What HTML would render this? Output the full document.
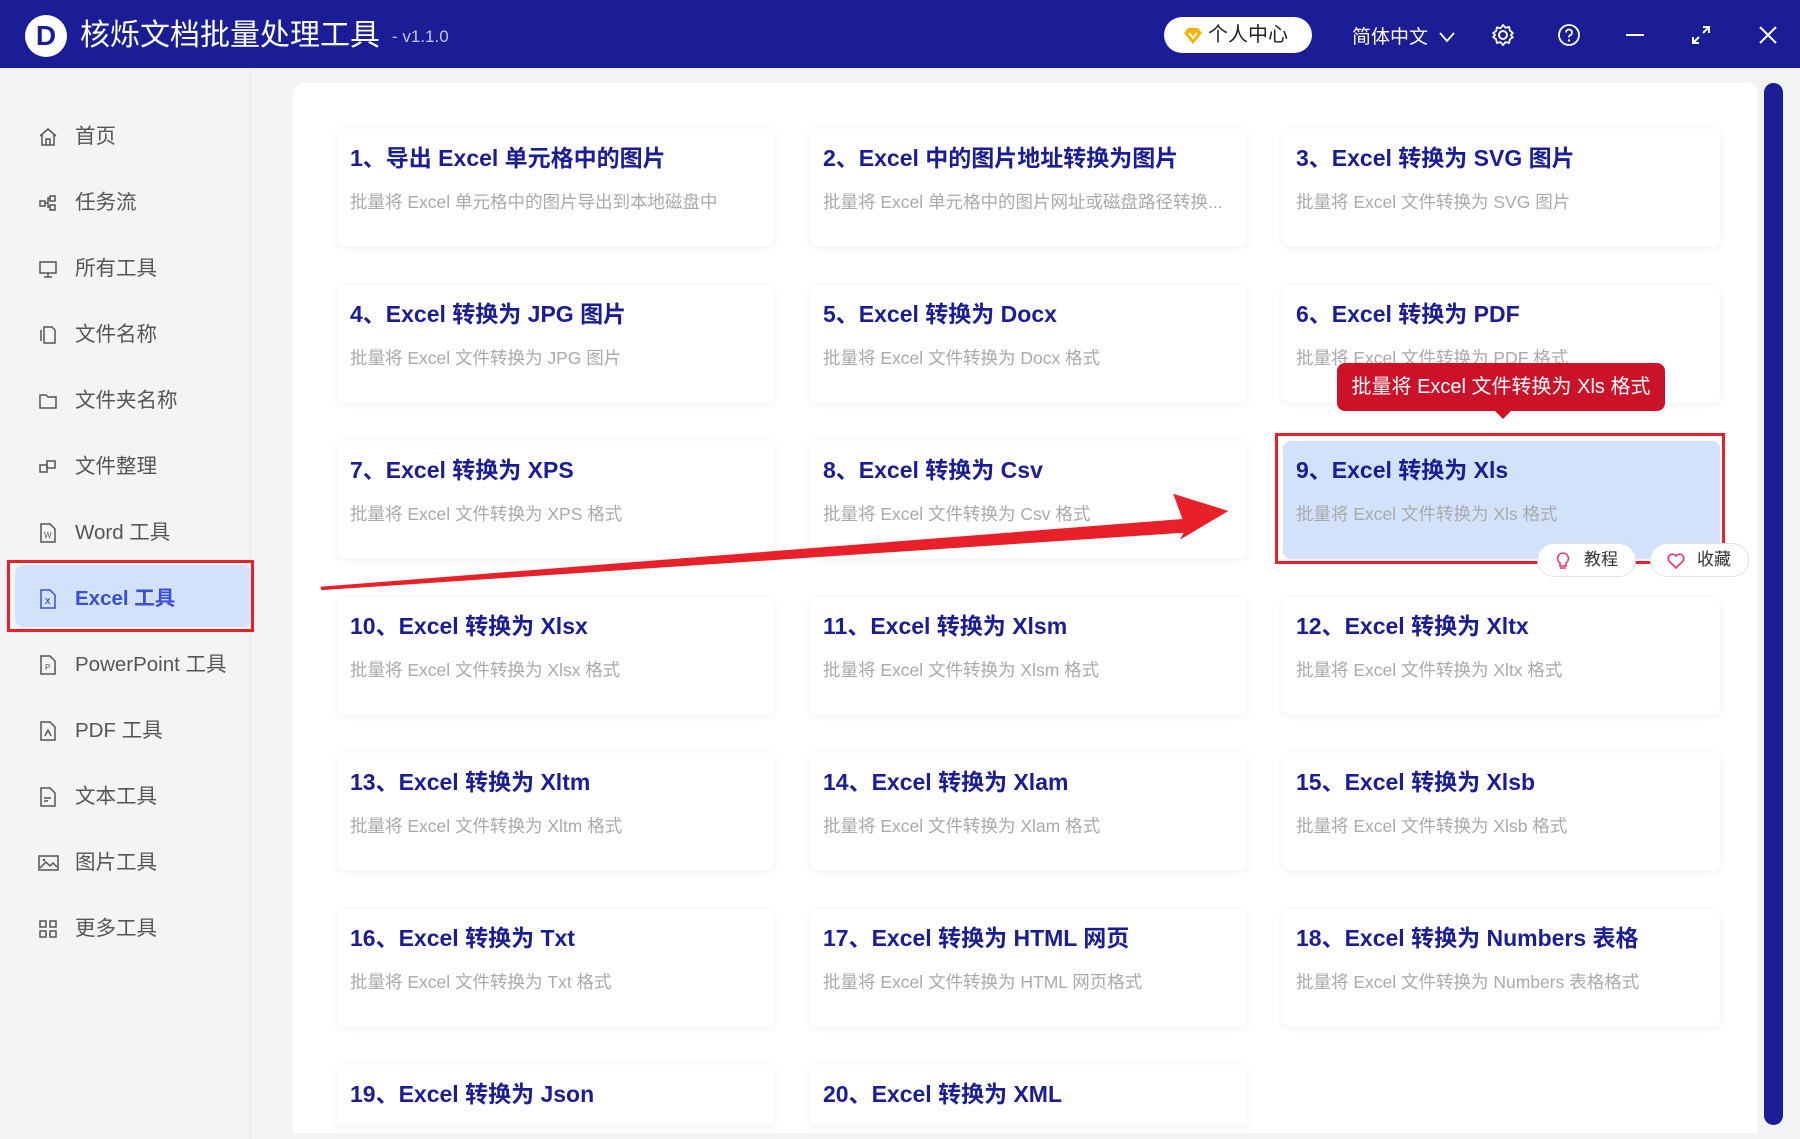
<!DOCTYPE html>
<html><head><meta charset="utf-8"><style>
*{margin:0;padding:0;box-sizing:border-box}
body{width:1800px;height:1139px;overflow:hidden;background:#f4f4f4;font-family:"Liberation Sans","Noto Sans CJK SC",sans-serif;position:relative}
.top{position:absolute;left:0;top:0;width:1800px;height:68px;background:#1a1d96}
.logo{position:absolute;left:25px;top:15px;width:42px;height:42px;border-radius:50%;background:#fff;color:#1a1d96;font-weight:bold;font-size:28px;text-align:center;line-height:42px}
.title{position:absolute;left:80px;top:16px;color:#fff;font-size:30px;line-height:40px}
.ver{position:absolute;left:392px;top:27px;color:#c4c6e6;font-size:17px}
.pill{position:absolute;left:1164px;top:17px;width:148px;height:36px;border-radius:18px;background:#fff;font-size:20px;line-height:36px;color:#222;padding-left:44px}
.dia{position:absolute;left:18px;top:10px}
.lang{position:absolute;left:1352px;top:22px;color:#fff;font-size:19px}
.ic{position:absolute;top:23px}
.side{position:absolute;left:0;top:68px;width:251px;height:1071px;background:#f4f4f4;border-right:1px solid #e8e8e8}
.it{position:absolute;left:0;width:251px;height:40px;font-size:20.5px;color:#555;line-height:40px}
.it svg{position:absolute;left:38px;top:10px}
.it span{position:absolute;left:75px}
.act{position:absolute;left:7px;top:560px;width:247px;height:72px;border:3px solid #e8202a}
.act div{position:absolute;left:5px;top:2px;right:0;bottom:2px;background:#d3e2fb;border-radius:8px}
.panel{position:absolute;left:293px;top:83px;width:1464px;height:1050px;background:#fff;border-radius:10px 10px 0 0}
.sb{position:absolute;left:1764px;top:83px;width:19px;height:1042px;background:#1a1d96;border-radius:10px}
.card{position:absolute;width:437px;height:118px;background:#fff;border-radius:8px;box-shadow:0 1px 8px rgba(0,0,0,.07)}
.card h3{position:absolute;left:13px;top:10px;font-size:23px;color:#1a1d96;font-weight:bold;white-space:nowrap}
.card p{position:absolute;left:13px;top:60px;font-size:17.5px;color:#aaa;white-space:nowrap}
.tip{position:absolute;left:1337px;top:363px;width:328px;height:48px;background:#cc1228;border-radius:8px;color:#fff;font-size:20px;line-height:48px;text-align:center}
.tip:after{content:"";position:absolute;left:156px;top:46px;border:10px solid transparent;border-top-color:#cc1228}
.rb{position:absolute;left:1275px;top:433px;width:450px;height:131px;border:3px solid #e8202a}
.btn{position:absolute;top:543px;width:99px;height:34px;border:1px solid #e2e2e2;border-radius:17px;background:#fff;font-size:17px;line-height:32px;color:#333;padding-left:46px}
</style></head><body>
<div class="top">
<div class="logo">D</div>
<div class="title">核烁文档批量处理工具</div>
<div class="ver">- v1.1.0</div>
<div class="pill"><svg class="dia" width="22" height="18" viewBox="0 0 22 18"><path d="M2 6L6 1H16L20 6L11 17Z" fill="#f7b300"/><path d="M7 6L11 11L15 6" stroke="#fff" stroke-width="2" fill="none"/></svg>个人中心</div>
<div class="lang">简体中文 <svg width="16" height="12" viewBox="0 0 16 12" style="margin-left:6px"><path d="M1 2L8 10L15 2" stroke="#fff" stroke-width="1.8" fill="none"/></svg></div>
<svg class="ic" style="left:1491px" width="24" height="24" viewBox="0 0 24 24"><circle cx="12" cy="12" r="4" stroke="#fff" stroke-width="2" fill="none"/><path d="M12 2l2.5 2.8 3.6-.8.8 3.6L21.8 10 20 12l1.8 2.4-2.9 1.9-.8 3.6-3.6-.8L12 22l-2.5-2.9-3.6.8-.8-3.6L2.2 14 4 12 2.2 10l2.9-1.9.8-3.6 3.6.8Z" stroke="#fff" stroke-width="1.8" fill="none"/></svg>
<svg class="ic" style="left:1557px" width="24" height="24" viewBox="0 0 24 24"><circle cx="12" cy="12" r="10" stroke="#fff" stroke-width="1.8" fill="none"/><path d="M9 9.5a3 3 0 1 1 4 2.8c-1 .4-1 1.2-1 2.2" stroke="#fff" stroke-width="1.8" fill="none"/><circle cx="12" cy="17.5" r="1.2" fill="#fff"/></svg>
<svg class="ic" style="left:1623px" width="24" height="24"><path d="M3 12H21" stroke="#fff" stroke-width="2"/></svg>
<svg class="ic" style="left:1689px" width="24" height="24"><path d="M14 4H20V10M20 4L14 10M10 20H4V14M4 20L10 14" stroke="#fff" stroke-width="2" fill="none"/></svg>
<svg class="ic" style="left:1756px" width="24" height="24"><path d="M4 4L20 20M20 4L4 20" stroke="#fff" stroke-width="2"/></svg>
</div>
<div class="side">
<div class="act" style="top:492px"><div></div></div>
</div>
<div class="it" style="top:117px"><svg width="20" height="20" viewBox="0 0 20 20"><path d="M2 9L10 2L18 9M4 8V18H16V8M8 18V12H12V18" stroke="#555" stroke-width="1.5" fill="none"/></svg><span>首页</span></div>
<div class="it" style="top:183px"><svg width="20" height="20" viewBox="0 0 20 20"><rect x="2" y="8" width="5" height="5" stroke="#555" stroke-width="1.5" fill="none"/><rect x="12" y="3" width="5" height="5" stroke="#555" stroke-width="1.5" fill="none"/><rect x="12" y="12" width="5" height="5" stroke="#555" stroke-width="1.5" fill="none"/><path d="M7 10H10V5H12M10 10V14H12" stroke="#555" stroke-width="1.5" fill="none"/></svg><span>任务流</span></div>
<div class="it" style="top:249px"><svg width="20" height="20" viewBox="0 0 20 20"><rect x="2" y="3" width="16" height="11" stroke="#555" stroke-width="1.5" fill="none"/><path d="M6 18H14M10 14V18" stroke="#555" stroke-width="1.5"/></svg><span>所有工具</span></div>
<div class="it" style="top:315px"><svg width="20" height="20" viewBox="0 0 20 20"><path d="M6 2H14L17 5V18H6Z M3 5V16" stroke="#555" stroke-width="1.5" fill="none"/></svg><span>文件名称</span></div>
<div class="it" style="top:381px"><svg width="20" height="20" viewBox="0 0 20 20"><path d="M2 4H8L10 6H18V17H2Z" stroke="#555" stroke-width="1.5" fill="none"/></svg><span>文件夹名称</span></div>
<div class="it" style="top:447px"><svg width="20" height="20" viewBox="0 0 20 20"><rect x="2" y="8" width="7" height="7" stroke="#555" stroke-width="1.5" fill="none"/><rect x="9" y="4" width="8" height="7" stroke="#555" stroke-width="1.5" fill="none"/></svg><span>文件整理</span></div>
<div class="it" style="top:513px"><svg width="20" height="20" viewBox="0 0 20 20"><path d="M3 1H12L17 6V19H3Z" stroke="#555" stroke-width="1.5" fill="none"/><text x="6" y="15" font-size="8" fill="#555">W</text></svg><span>Word 工具</span></div>
<div class="it" style="top:579px;color:#3a4fd6;font-weight:bold"><svg width="20" height="20" viewBox="0 0 20 20"><path d="M3 1H12L17 6V19H3Z" stroke="#3a4fd6" stroke-width="1.5" fill="none"/><text x="7" y="15" font-size="8" fill="#3a4fd6">X</text></svg><span>Excel 工具</span></div>
<div class="it" style="top:645px"><svg width="20" height="20" viewBox="0 0 20 20"><path d="M3 1H12L17 6V19H3Z" stroke="#555" stroke-width="1.5" fill="none"/><text x="7" y="15" font-size="8" fill="#555">P</text></svg><span>PowerPoint 工具</span></div>
<div class="it" style="top:711px"><svg width="20" height="20" viewBox="0 0 20 20"><path d="M3 1H12L17 6V19H3Z M7 15L10 9L13 15" stroke="#555" stroke-width="1.5" fill="none"/></svg><span>PDF 工具</span></div>
<div class="it" style="top:777px"><svg width="20" height="20" viewBox="0 0 20 20"><path d="M3 1H12L17 6V19H3Z M6 11H13M6 14H10" stroke="#555" stroke-width="1.5" fill="none"/></svg><span>文本工具</span></div>
<div class="it" style="top:843px"><svg width="22" height="20" viewBox="0 0 22 20"><rect x="1" y="3" width="19" height="14" stroke="#555" stroke-width="1.5" fill="none"/><path d="M2 15L8 9L12 13L15 10L19 14" stroke="#555" stroke-width="1.5" fill="none"/><circle cx="6" cy="7" r="1.3" fill="#555"/></svg><span>图片工具</span></div>
<div class="it" style="top:909px"><svg width="20" height="20" viewBox="0 0 20 20"><rect x="2" y="2" width="6" height="6" stroke="#555" stroke-width="1.5" fill="none"/><rect x="12" y="2" width="6" height="6" stroke="#555" stroke-width="1.5" fill="none"/><rect x="2" y="12" width="6" height="6" stroke="#555" stroke-width="1.5" fill="none"/><rect x="12" y="12" width="6" height="6" stroke="#555" stroke-width="1.5" fill="none"/></svg><span>更多工具</span></div>

<div class="panel"></div>
<div class="sb"></div>

<div class="card" style="left:337px;top:129px"><h3>1、导出 Excel 单元格中的图片</h3><p>批量将 Excel 单元格中的图片导出到本地磁盘中</p></div>
<div class="card" style="left:810px;top:129px"><h3>2、Excel 中的图片地址转换为图片</h3><p>批量将 Excel 单元格中的图片网址或磁盘路径转换...</p></div>
<div class="card" style="left:1283px;top:129px"><h3>3、Excel 转换为 SVG 图片</h3><p>批量将 Excel 文件转换为 SVG 图片</p></div>
<div class="card" style="left:337px;top:285px"><h3>4、Excel 转换为 JPG 图片</h3><p>批量将 Excel 文件转换为 JPG 图片</p></div>
<div class="card" style="left:810px;top:285px"><h3>5、Excel 转换为 Docx</h3><p>批量将 Excel 文件转换为 Docx 格式</p></div>
<div class="card" style="left:1283px;top:285px"><h3>6、Excel 转换为 PDF</h3><p>批量将 Excel 文件转换为 PDF 格式</p></div>
<div class="card" style="left:337px;top:441px"><h3>7、Excel 转换为 XPS</h3><p>批量将 Excel 文件转换为 XPS 格式</p></div>
<div class="card" style="left:810px;top:441px"><h3>8、Excel 转换为 Csv</h3><p>批量将 Excel 文件转换为 Csv 格式</p></div>
<div class="card" style="left:1283px;top:441px;background:#d3e2fb"><h3>9、Excel 转换为 Xls</h3><p>批量将 Excel 文件转换为 Xls 格式</p></div>
<div class="card" style="left:337px;top:597px"><h3>10、Excel 转换为 Xlsx</h3><p>批量将 Excel 文件转换为 Xlsx 格式</p></div>
<div class="card" style="left:810px;top:597px"><h3>11、Excel 转换为 Xlsm</h3><p>批量将 Excel 文件转换为 Xlsm 格式</p></div>
<div class="card" style="left:1283px;top:597px"><h3>12、Excel 转换为 Xltx</h3><p>批量将 Excel 文件转换为 Xltx 格式</p></div>
<div class="card" style="left:337px;top:753px"><h3>13、Excel 转换为 Xltm</h3><p>批量将 Excel 文件转换为 Xltm 格式</p></div>
<div class="card" style="left:810px;top:753px"><h3>14、Excel 转换为 Xlam</h3><p>批量将 Excel 文件转换为 Xlam 格式</p></div>
<div class="card" style="left:1283px;top:753px"><h3>15、Excel 转换为 Xlsb</h3><p>批量将 Excel 文件转换为 Xlsb 格式</p></div>
<div class="card" style="left:337px;top:909px"><h3>16、Excel 转换为 Txt</h3><p>批量将 Excel 文件转换为 Txt 格式</p></div>
<div class="card" style="left:810px;top:909px"><h3>17、Excel 转换为 HTML 网页</h3><p>批量将 Excel 文件转换为 HTML 网页格式</p></div>
<div class="card" style="left:1283px;top:909px"><h3>18、Excel 转换为 Numbers 表格</h3><p>批量将 Excel 文件转换为 Numbers 表格格式</p></div>
<div class="card" style="left:337px;top:1065px;height:60px;border-radius:8px 8px 0 0"><h3>19、Excel 转换为 Json</h3></div>
<div class="card" style="left:810px;top:1065px;height:60px;border-radius:8px 8px 0 0"><h3>20、Excel 转换为 XML</h3></div>

<div class="tip">批量将 Excel 文件转换为 Xls 格式</div>
<div class="rb"></div>
<div class="btn" style="left:1537px"><svg style="position:absolute;left:18px;top:8px" width="14" height="18" viewBox="0 0 14 18"><path d="M7 1a5.5 5.5 0 0 0-3 10v3h6v-3A5.5 5.5 0 0 0 7 1Z M4 16H10" stroke="#f0307a" stroke-width="1.6" fill="none"/></svg>教程</div>
<div class="btn" style="left:1650px"><svg style="position:absolute;left:16px;top:9px" width="18" height="16" viewBox="0 0 18 16"><path d="M9 15L2 8A4 4 0 0 1 9 3A4 4 0 0 1 16 8Z" stroke="#f0307a" stroke-width="1.6" fill="none"/></svg>收藏</div>

<svg style="position:absolute;left:0;top:0" width="1800" height="1139" viewBox="0 0 1568 992"><polygon points="279,511 1030,452 1022,430 1070,445 1028,470 1031,464 280,514" fill="#e8202a"/></svg>
</body></html>
